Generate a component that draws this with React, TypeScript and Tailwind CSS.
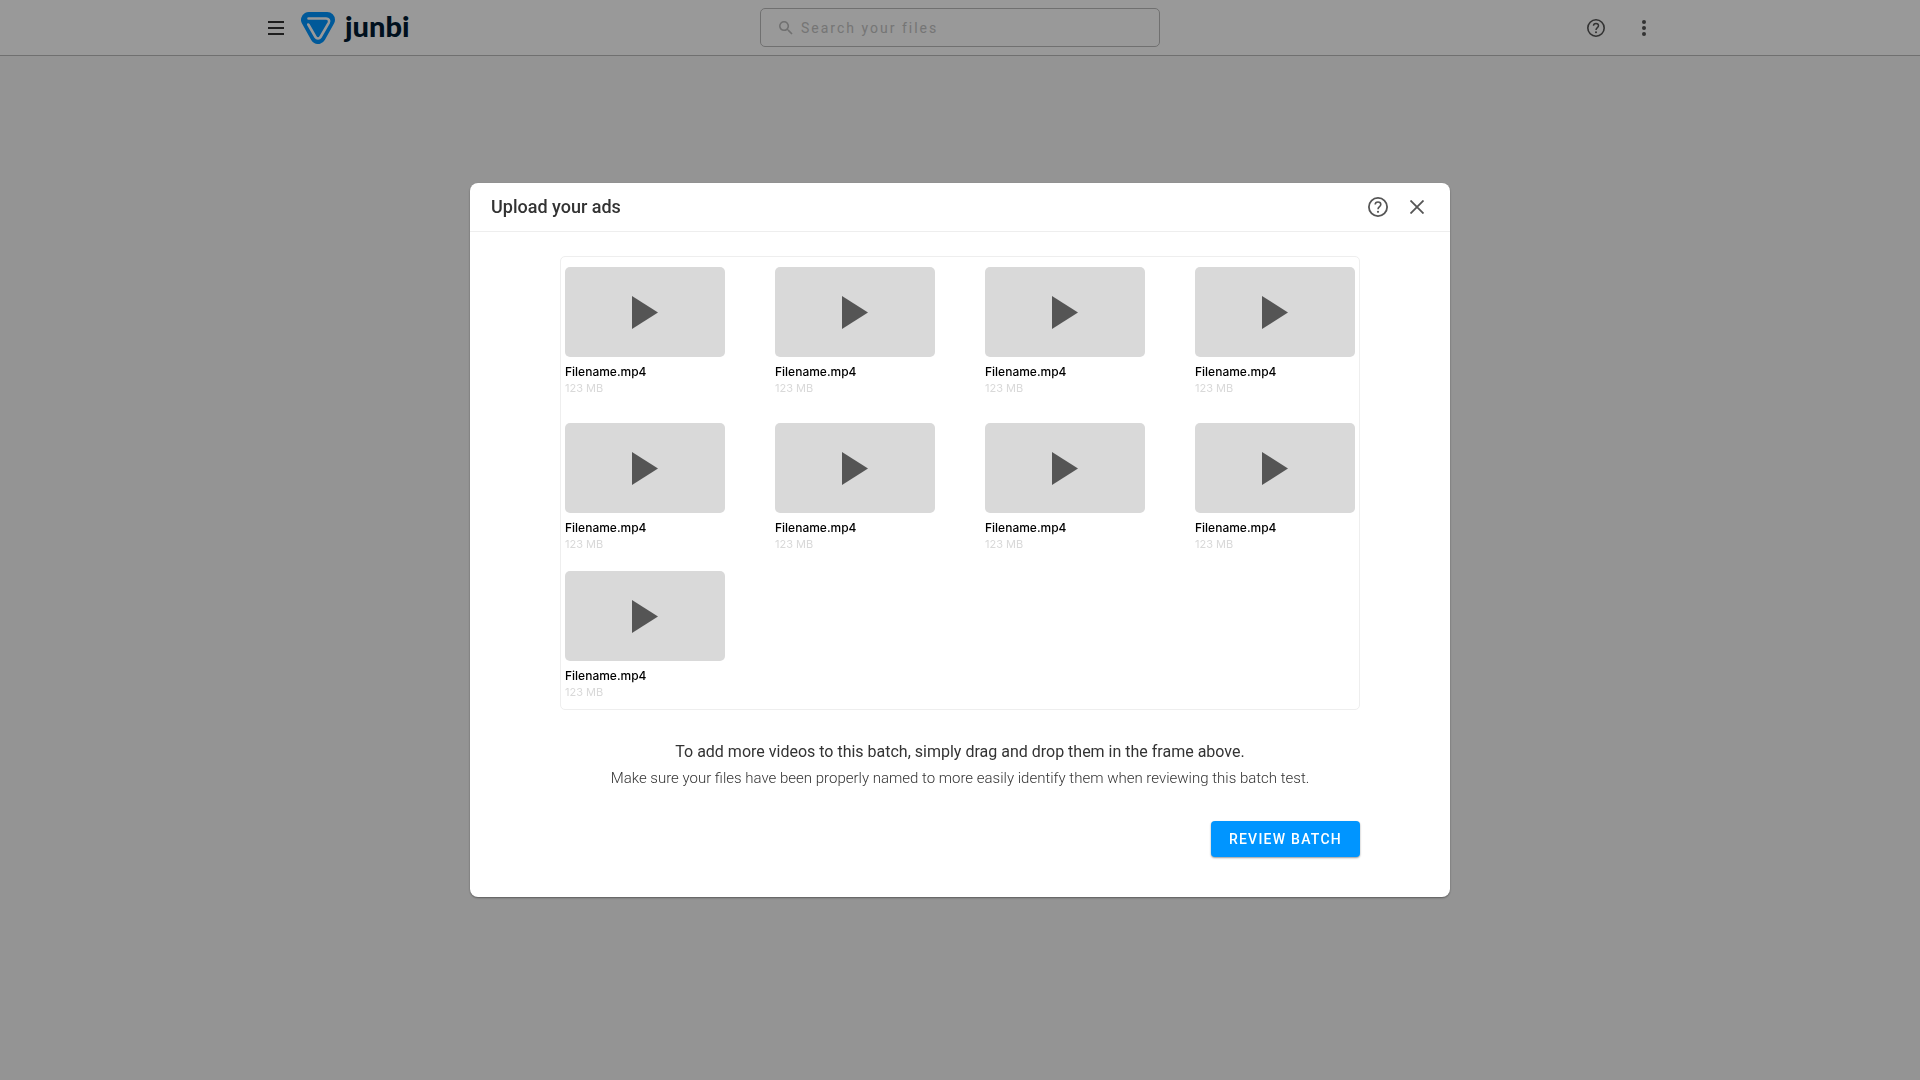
import React, { useState } from "react";

const files = Array.from({ length: 9 }, (_, i) => ({
    id: i + 1,
    name: "Filename.mp4",
    size: "123 MB",
}));

function HelpIcon({ className }: { className?: string }) {
    return (
        <svg viewBox="0 0 20 20" className={className} aria-hidden="true">
            <circle cx="10" cy="10" r="9.1" fill="none" stroke="currentColor" strokeWidth="1.8" />
            <path
                d="M7.2 7.600c0-1.600 1.200-2.600 2.800-2.600s2.800 1 2.800 2.500c0 2-2.800 2.200-2.800 4.700"
                fill="none"
                stroke="currentColor"
                strokeWidth="1.6"
            />
            <circle cx="10" cy="14.800" r="1.1" fill="currentColor" />
        </svg>
    );
}

function Logo() {
    return (
        <a href="#" className="flex items-center gap-2.5 text-[#001b33]">
            <svg viewBox="0 0 34 32" className="h-8 w-[34px]" aria-hidden="true">
                <path
                    d="M7.800 7.800h18.400L17 24.200z"
                    fill="#0095ff"
                    stroke="#0095ff"
                    strokeWidth="15.600"
                    strokeLinejoin="round"
                />
                <path
                    d="M7.500 6.500H25c2.600 0 3.900 2 2.700 4.300l-8.200 14.200c-1.200 2-3.800 2-5 0L7.300 12.500"
                    fill="none"
                    stroke="#fff"
                    strokeWidth="2.600"
                    strokeLinecap="round"
                    strokeLinejoin="round"
                />
                <path d="M7.500 10h16.500L17 22z" fill="#0095ff" />
            </svg>
            <span className="pb-1 font-[Lato,sans-serif] text-[29px] leading-8 font-black">junbi</span>
        </a>
    );
}

function Header() {
    const [query, setQuery] = useState("");

    return (
        <header className="border-b border-[#bbbbbb] bg-white">
            <div className="mx-auto grid h-[55px] max-w-[1400px] grid-cols-[1fr_400px_1fr] items-center">
                <div className="flex items-center gap-[17px] pl-2">
                    <button type="button" aria-label="Menu" className="flex w-4 flex-col gap-1">
                        <span className="h-0.5 bg-[#333333]" />
                        <span className="h-0.5 bg-[#333333]" />
                        <span className="h-0.5 bg-[#333333]" />
                    </button>
                    <Logo />
                </div>
                <label className="flex h-[39px] items-center gap-2 rounded-[5px] border border-[#bbbbbb] px-[18px] text-[#bbbbbb]">
                    <svg viewBox="3 3 18 18" fill="currentColor" className="size-[14px]" aria-hidden="true">
                        <path d="M15.500 14h-.79l-.28-.27A6.470 6.470 0 0 0 16 9.500 6.500 6.500 0 1 0 9.500 16c1.610 0 3.090-.59 4.230-1.570l.27.28v.79l5 4.990L20.490 19l-4.990-5zm-6 0C7.010 14 5 11.990 5 9.500S7.010 5 9.500 5 14 7.010 14 9.500 11.990 14 9.500 14z" />
                    </svg>
                    <input
                        type="search"
                        aria-label="Search your files"
                        placeholder="Search your files"
                        value={query}
                        onChange={(e) => setQuery(e.target.value)}
                        className="min-w-0 flex-1 text-sm tracking-[2px] outline-none placeholder:text-[#c4c4c4]"
                    />
                </label>
                <div className="flex items-center justify-end gap-[23px] text-[#555555]">
                    <button type="button" aria-label="Help">
                        <HelpIcon className="size-[18px]" />
                    </button>
                    <button type="button" aria-label="More options" className="flex w-8 flex-col items-center gap-[2px]">
                        <span className="size-1 rounded-full bg-current" />
                        <span className="size-1 rounded-full bg-current" />
                        <span className="size-1 rounded-full bg-current" />
                    </button>
                </div>
            </div>
        </header>
    );
}

function VideoCard({ name, size }: { name: string; size: string }) {
    return (
        <li className="w-40 font-[Inter,sans-serif]">
            <div className="flex h-[90px] items-center justify-center rounded-[5px] bg-[#d9d9d9]">
                <svg viewBox="0 0 26 33" className="h-[33px] w-[26px]" aria-hidden="true">
                    <path d="M0 0l26 16.500L0 33z" fill="#555555" />
                </svg>
            </div>
            <p className="mt-[7px] text-xs leading-4 font-medium text-black">{name}</p>
            <p className="text-[11px] leading-4 text-[#d9d9d9]">{size}</p>
        </li>
    );
}

function UploadDialog() {
    return (
        <section
            role="dialog"
            aria-modal="true"
            aria-labelledby="upload-title"
            className="w-full max-w-[980px] rounded-lg bg-white shadow-[0_1px_2px_rgba(0,0,0,0.4)]"
        >
            {/* Title bar */}
            <div className="flex h-[49px] items-center justify-between border-b border-[#eeeeee] px-[21px]">
                <h1 id="upload-title" className="text-lg font-medium text-[#333333]">
                    Upload your ads
                </h1>
                <div className="flex items-center gap-[22px] pr-[5px] text-[#555555]">
                    <button type="button" aria-label="Help">
                        <HelpIcon className="size-5" />
                    </button>
                    <button type="button" aria-label="Close">
                        <svg viewBox="0 0 14 14" className="size-[14px]" aria-hidden="true">
                            <path d="M.5.5l13 13M13.500.5l-13 13" fill="none" stroke="currentColor" strokeWidth="1.8" />
                        </svg>
                    </button>
                </div>
            </div>

            <div className="px-[90px] pt-6 pb-10">
                {/* Drop frame */}
                <ul className="grid grid-cols-4 grid-rows-[156px_148px_auto] gap-x-[50px] rounded-[5px] border border-[#eeeeee] px-1 pt-[10px] pb-[9px]">
                    {files.map((file) => (
                        <VideoCard key={file.id} name={file.name} size={file.size} />
                    ))}
                </ul>

                <div className="mt-7 text-center">
                    <p className="text-base leading-7 text-[#333333]">
                        To add more videos to this batch, simply drag and drop them in the frame above.
                    </p>
                    <p className="text-[15px] leading-6 font-light text-[#333333]">
                        Make sure your files have been properly named to more easily identify them when reviewing this batch test.
                    </p>
                </div>

                <div className="mt-[31px] flex justify-end">
                    <button
                        type="button"
                        className="h-9 rounded-[4px] bg-[#0095ff] px-[18px] text-sm font-medium tracking-[1.25px] text-white shadow-[0_1px_2px_rgba(0,0,0,0.4)]"
                    >
                        REVIEW BATCH
                    </button>
                </div>
            </div>
        </section>
    );
}

export default function App() {
    return (
        <div className="min-h-screen bg-[#f7f7f7] font-[Roboto,sans-serif]">
            <Header />
            <div className="fixed inset-0 flex items-center justify-center bg-black/40">
                <UploadDialog />
            </div>
        </div>
    );
}
